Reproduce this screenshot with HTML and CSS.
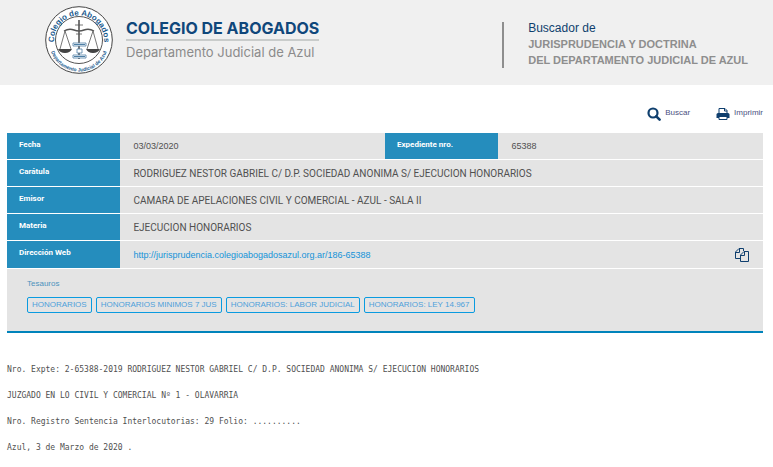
FILE: index.html
```html
<!DOCTYPE html>
<html lang="es">
<head>
<meta charset="utf-8">
<meta name="viewport" content="width=device-width, initial-scale=1">
<title>Colegio de Abogados - Departamento Judicial de Azul</title>
<link rel="stylesheet" href="styles.css">
</head>
<body>
<header class="site-header">
  <div class="brand">
    <svg class="seal" viewBox="0 0 68 68" aria-hidden="true">
      <defs>
        <path id="arc-top" d="M10.500 43 A25 25 0 1 1 57.500 43"/>
        <path id="arc-bottom" d="M4.500 36 A29.500 29.500 0 0 0 63.500 36"/>
      </defs>
      <circle cx="34" cy="34" r="33.300" fill="#fff" stroke="#444" stroke-width="1"/>
      <circle cx="34" cy="34" r="23.500" fill="#fff" stroke="#555" stroke-width="1"/>
      <text class="seal-top"><textPath href="#arc-top" startOffset="50%" text-anchor="middle">Colegio de Abogados</textPath></text>
      <text class="seal-bottom"><textPath href="#arc-bottom" startOffset="50%" text-anchor="middle">Departamento Judicial de Azul</textPath></text>
      <g fill="none" stroke="#555" stroke-width="0.800">
        <path d="M19 25 Q24 22 29 24 Q34 26 39 24 Q44 22 49 25" stroke-width="1.400"/>
        <path d="M20 25 L15 43 M20 25 L26 43 M48 25 L42 43 M48 25 L53 43"/>
        <path d="M34 14 V53" stroke-width="1.600"/>
        <path d="M30 19 H38 M31 28 H37"/>
        <path d="M28 37 H41 V40 H28 Z M32 43 H37 V47 H32 Z M28 49 H41 V52 H28 Z" fill="#fff" stroke="#4e7fa5"/>
      </g>
      <path d="M13 43 H27 Q25 47 20 47 Q15 47 13 43 M41 43 H55 Q53 47 48 47 Q43 47 41 43" fill="#444"/>
      <path d="M29 38.500 H40 M29 50.500 H40" stroke="#4e7fa5" stroke-width="1.200" fill="none"/>
    </svg>
    <div class="brand-text">
      <p class="brand-name">COLEGIO DE ABOGADOS</p>
      <p class="brand-sub">Departamento Judicial de Azul</p>
    </div>
  </div>
  <div class="site-title">
    <p class="title-lead">Buscador de</p>
    <h1>JURISPRUDENCIA Y DOCTRINA<br>DEL DEPARTAMENTO JUDICIAL DE AZUL</h1>
  </div>
</header>
<main>
  <nav class="actions">
    <a href="#buscar"><svg width="14" height="14" viewBox="0 0 14 14" aria-hidden="true"><circle cx="6" cy="6" r="4.500" fill="none" stroke="#0f3f6e" stroke-width="2.200"/><path d="M9.300 9.300 L12.600 12.600" stroke="#0f3f6e" stroke-width="2.600" stroke-linecap="round"/></svg>Buscar</a>
    <a href="#imprimir"><svg width="14" height="14" viewBox="0 0 14 14" aria-hidden="true"><path d="M3 6.500 V1.500 H9 L11 3.500 V6.500" fill="#fff" stroke="#0f3f6e"/><path d="M8.500 1.500 V4 H11" fill="none" stroke="#0f3f6e"/><path d="M2 6 H12 Q13.500 6 13.500 7.500 V11 H0.500 V7.500 Q0.500 6 2 6 Z" fill="#0f3f6e"/><path d="M3 9.500 H11 V12.500 H3 Z" fill="#fff" stroke="#0f3f6e"/></svg>Imprimir</a>
  </nav>
  <section class="record">
    <table>
      <tbody>
        <tr><th scope="row">Fecha</th><td class="number">03/03/2020</td><th scope="row">Expediente nro.</th><td class="number">65388</td></tr>
        <tr><th scope="row">Carátula</th><td colspan="3">RODRIGUEZ NESTOR GABRIEL C/ D.P. SOCIEDAD ANONIMA S/ EJECUCION HONORARIOS</td></tr>
        <tr><th scope="row">Emisor</th><td colspan="3">CAMARA DE APELACIONES CIVIL Y COMERCIAL - AZUL - SALA II</td></tr>
        <tr><th scope="row">Materia</th><td colspan="3">EJECUCION HONORARIOS</td></tr>
        <tr><th scope="row">Dirección Web</th><td colspan="3"><div class="url-row"><a href="#186-65388">http://jurisprudencia.colegioabogadosazul.org.ar/186-65388</a><button type="button" class="copy" aria-label="Copiar"><svg width="16" height="16" viewBox="0 0 16 16" aria-hidden="true"><g fill="none" stroke="#0f3f6e"><path d="M6 11.500 H1.500 V5 L5 1.500 H9.500 V4 M1.500 5.500 H5.500 V1.500"/><path d="M6.500 8 L10 4.500 H14.500 V14.500 H6.500 Z M6.500 8.500 H10.500 V4.500"/></g></svg></button></div></td></tr>
      </tbody>
    </table>
    <div class="thesaurus">
      <h2>Tesauros</h2>
      <ul>
        <li><a href="#t1">HONORARIOS</a></li>
        <li><a href="#t2">HONORARIOS MINIMOS 7 JUS</a></li>
        <li><a href="#t3">HONORARIOS: LABOR JUDICIAL</a></li>
        <li><a href="#t4">HONORARIOS: LEY 14.967</a></li>
      </ul>
    </div>
  </section>
  <article class="ruling">
    <p>Nro. Expte: 2-65388-2019 RODRIGUEZ NESTOR GABRIEL C/ D.P. SOCIEDAD ANONIMA S/ EJECUCION HONORARIOS</p>
    <p>JUZGADO EN LO CIVIL Y COMERCIAL Nº 1 - OLAVARRIA</p>
    <p>Nro. Registro Sentencia Interlocutorias: 29 Folio: ..........</p>
    <p>Azul, 3 de Marzo de 2020 .</p>
  </article>
</main>
</body>
</html>
```
FILE: styles.css
```css
* { box-sizing: border-box; }
body, p, h1, h2, ul { margin: 0; padding: 0; }
body {
  background: #fff;
  color: #505050;
  font-family: "Liberation Sans", Arial, sans-serif;
  font-size: 10px;
}
a { text-decoration: none; }
.site-header {
  display: flex;
  justify-content: space-between;
  align-items: flex-start;
  padding: 6px 25px 11px 45px;
  background: #f0f0f0;
}
.brand { display: flex; gap: 13px; }
.seal { display: block; width: 68px; height: 68px; }
.seal text { fill: #1a5a8e; font-weight: 700; }
.seal-top { font-size: 8px; }
.seal-bottom { font-size: 5px; }
.brand-text { padding-top: 12px; }
.brand-name {
  padding-bottom: 1px;
  border-bottom: 2px solid #c9cccb;
  color: #0f477b;
  font: 700 16px/20px Inter, sans-serif;
}
.brand-sub {
  padding-top: 3px;
  color: #8b8b8b;
  font: 13px/16px Inter, sans-serif;
}
.site-title {
  margin-top: 16px;
  padding-left: 24px;
  border-left: 2px solid #8e8e8e;
  color: #8e8e8e;
}
.title-lead { margin-bottom: 2px; color: #0f3f6e; font-size: 12px; line-height: 12px; }
h1 { font-size: 11px; line-height: 16px; }
main { padding: 22px 10px 10px 7px; }
.actions { display: flex; justify-content: flex-end; gap: 26px; margin-bottom: 12px; }
.actions a {
  display: flex;
  gap: 4px;
  height: 14px;
  color: #4b4f80;
  font-size: 8px;
  line-height: 12px;
}
.record { border-bottom: 2px solid #0083bb; background: #e4e4e4; }
table {
  width: 100%;
  border-collapse: separate;
  border-spacing: 0;
  table-layout: fixed;
  font-family: Roboto, Arial, sans-serif;
}
th, td { height: 27px; border-bottom: 1px solid #fff; text-align: left; }
tr:last-child > * { height: 28px; }
th {
  width: 15%;
  padding: 0 12px 4px;
  background: #258dbd;
  color: #fff;
  font-size: 8px;
}
td { padding: 0 13px; }
.number, .url-row { font-family: "Liberation Sans", Arial, sans-serif; font-size: 9px; }
.url-row { display: flex; justify-content: space-between; align-items: center; }
.url-row a { color: #1493d8; }
.copy { display: block; padding: 0; border: 0; background: none; line-height: 0; }
.thesaurus { padding: 10px 20px 18px; }
h2 { color: #4d92bd; font-size: 8px; font-weight: 400; line-height: 10px; }
ul { display: flex; flex-wrap: wrap; gap: 4px; margin-top: 8px; list-style: none; }
li a {
  display: block;
  padding: 0 4px;
  border: 1px solid #0a9be0;
  border-radius: 2px;
  color: #4da0da;
  font-size: 8px;
  line-height: 14px;
}
.ruling {
  padding-top: 30px;
  font: 8px/13px "DejaVu Sans Mono", monospace;
}
.ruling p + p { margin-top: 13px; }
```
